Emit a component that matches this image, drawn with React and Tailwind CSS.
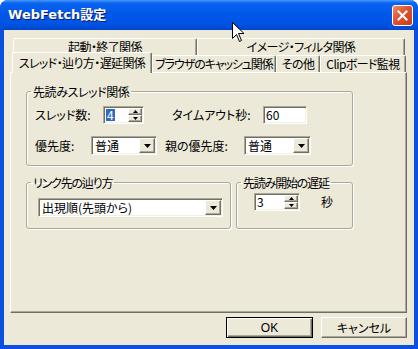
import React from 'react'

const raised = 'bg-[#ece9d8] border border-t-white border-l-white border-r-[#716f64] border-b-[#716f64] shadow-[inset_-1px_-1px_0_#aca899]'
const sunken = 'bg-white border border-t-[#aca899] border-l-[#aca899] border-r-white border-b-white shadow-[inset_1px_1px_0_#716f64,inset_-1px_-1px_0_#f1efe2]'
const group = 'border border-[#aca899] rounded-[3px] shadow-[1px_1px_0_#fff,inset_1px_1px_0_#fff] p-0 m-0 min-w-0'
const tab = 'flex items-center justify-center rounded-t-[2px] bg-[#ece9d8] border border-b-0 border-t-white border-l-white border-r-[#716f64] shadow-[inset_-1px_0_0_#aca899] whitespace-nowrap'

function Arrow({ up }) {
  return (
    <svg width="5" height="3" viewBox="0 0 5 3">
      <path d={up ? 'M2.5 0 L5 3 L0 3 Z' : 'M0 0 L5 0 L2.5 3 Z'} fill="#000" />
    </svg>
  )
}

function Spin({ value, selected, className = '' }) {
  return (
    <div className={`flex h-[18px] ${sunken} ${className}`}>
      <div className="flex-1 flex items-center pl-[2px] leading-none">
        {selected
          ? <span className="bg-[#316ac5] text-white px-[1px]">{value}</span>
          : <span>{value}</span>}
      </div>
      <div className="flex flex-col w-[15px] py-[1px] pr-[1px]">
        <div className={`flex-1 flex items-center justify-center ${raised}`}><Arrow up /></div>
        <div className={`flex-1 flex items-center justify-center ${raised}`}><Arrow /></div>
      </div>
    </div>
  )
}

function Combo({ value, className = '' }) {
  return (
    <div className={`flex h-[19px] ${sunken} ${className}`}>
      <div className="flex-1 flex items-center pl-[3px] leading-none whitespace-nowrap">{value}</div>
      <div className="py-[1px] pr-[1px] flex">
        <div className={`w-[16px] flex items-center justify-center ${raised}`}>
          <svg width="7" height="4" viewBox="0 0 7 4"><path d="M0 0 L7 0 L3.5 4 Z" fill="#000" /></svg>
        </div>
      </div>
    </div>
  )
}

function Legend({ children, tight }) {
  return (
    <legend className={`ml-[4px] px-[2px] leading-[15px] whitespace-nowrap ${tight ? 'tracking-[-1.2px]' : 'tracking-[-0.4px]'}`}>
      {children}
    </legend>
  )
}

export default function App() {
  return (
    <div className="w-[418px] h-[349px] flex flex-col rounded-t-[8px] overflow-hidden bg-[#0b4fe0] relative text-[12px] text-black font-['Noto_Sans_CJK_JP','Noto_Sans',sans-serif] [font-feature-settings:'palt']">
      {/* title bar */}
      <div className="h-[30px] shrink-0 flex items-center justify-between pl-[8px] pr-[5px] bg-[linear-gradient(to_bottom,#4a9cff_0%,#0a64f0_10%,#0058e8_45%,#0054e3_80%,#0046cc_100%)]">
        <span className="text-white font-bold text-[13px] font-['DejaVu_Sans','Noto_Sans_CJK_JP',sans-serif] [text-shadow:1px_1px_0_#0a1a6a] pb-[1px]">WebFetch設定</span>
        <div className="w-[21px] h-[21px] rounded-[3px] border border-white bg-[linear-gradient(135deg,#f08a6a_0%,#e0522f_45%,#c83c1a_100%)] flex items-center justify-center mt-[1px]">
          <svg width="11" height="11" viewBox="0 0 11 11">
            <path d="M1.5 1.5 L9.5 9.5 M9.5 1.5 L1.5 9.5" stroke="#fff" strokeWidth="2" strokeLinecap="square" />
          </svg>
        </div>
      </div>

      {/* body */}
      <div className="flex-1 mx-[4px] mb-[4px] bg-[#ece9d8] flex flex-col pt-[8px] pl-[6px] pr-[7px]">
        {/* tabs */}
        <div className="flex h-[17px] pl-[3px]">
          <div className={`w-[184px] tracking-[-0.6px] ${tab}`}>起動・終了関係</div>
          <div className={`w-[208px] tracking-[-0.6px] ${tab}`}>イメージ・フィルタ関係</div>
        </div>
        <div className="flex h-[17px] pl-[2px] items-end">
          <div className={`relative top-[1px] z-10 w-[140px] h-[21px] pb-[1px] tracking-[-0.6px] ${tab}`}>スレッド・辿り方・遅延関係</div>
          <div className={`w-[124px] h-[17px] tracking-[-1.1px] ${tab}`}>ブラウザのキャッシュ関係</div>
          <div className={`w-[44px] h-[17px] tracking-[-0.6px] ${tab}`}>その他</div>
          <div className={`w-[86px] h-[17px] tracking-[-0.6px] ${tab}`}>Clipボード監視</div>
        </div>

        {/* panel */}
        <div className={`h-[241px] ${raised} pl-[15px]`}>
          <fieldset className={`${group} mt-[11px] w-[327px] h-[82px]`}>
            <Legend>先読みスレッド関係</Legend>
            <div className="flex items-center h-[18px] mt-[7px] pl-[8px] whitespace-nowrap">
              <span className="w-[68px]">スレッド数:</span>
              <Spin value="4" selected className="w-[41px]" />
              <span className="ml-[28px] w-[91px]">タイムアウト秒:</span>
              <div className={`w-[44px] h-[18px] ${sunken} flex items-center pl-[2px] leading-none`}>60</div>
            </div>
            <div className="flex items-center h-[19px] mt-[12px] pl-[8px] whitespace-nowrap">
              <span className="w-[56px]">優先度:</span>
              <Combo value="普通" className="w-[66px]" />
              <span className="ml-[8px] w-[79px]">親の優先度:</span>
              <Combo value="普通" className="w-[67px]" />
            </div>
          </fieldset>

          <div className="flex gap-[5px] mt-[9px]">
            <fieldset className={`${group} w-[205px] h-[54px]`}>
              <Legend tight>リンク先の辿り方</Legend>
              <div className="pl-[11px] mt-[8px]">
                <Combo value="出現順(先頭から)" className="w-[185px]" />
              </div>
            </fieldset>
            <fieldset className={`${group} w-[117px] h-[54px]`}>
              <Legend tight>先読み開始の遅延</Legend>
              <div className="flex items-center pl-[17px] mt-[3px]">
                <Spin value="3" className="w-[46px]" />
                <span className="ml-[21px]">秒</span>
              </div>
            </fieldset>
          </div>
        </div>

        {/* buttons */}
        <div className="flex justify-end gap-[8px] mt-[4px]">
          <div className="w-[87px] h-[21px] border border-black bg-[#ece9d8] shadow-[inset_1px_1px_0_#fff,inset_-1px_-1px_0_#716f64,inset_-2px_-2px_0_#aca899] flex items-center justify-center font-['Liberation_Sans',sans-serif]">OK</div>
          <div className={`w-[86px] h-[21px] ${raised} flex items-center justify-center whitespace-nowrap`}>キャンセル</div>
        </div>
      </div>

      {/* mouse pointer */}
      <svg className="absolute left-[232px] top-[22px]" width="13" height="21" viewBox="0 0 13 21">
        <path d="M0.5 0.5 L0.5 16.5 L4.5 12.5 L7.5 19.5 L9.5 18.5 L6.5 11.5 L12 11.5 Z" fill="#fff" stroke="#000" strokeWidth="1" strokeLinejoin="miter" />
      </svg>
    </div>
  )
}
